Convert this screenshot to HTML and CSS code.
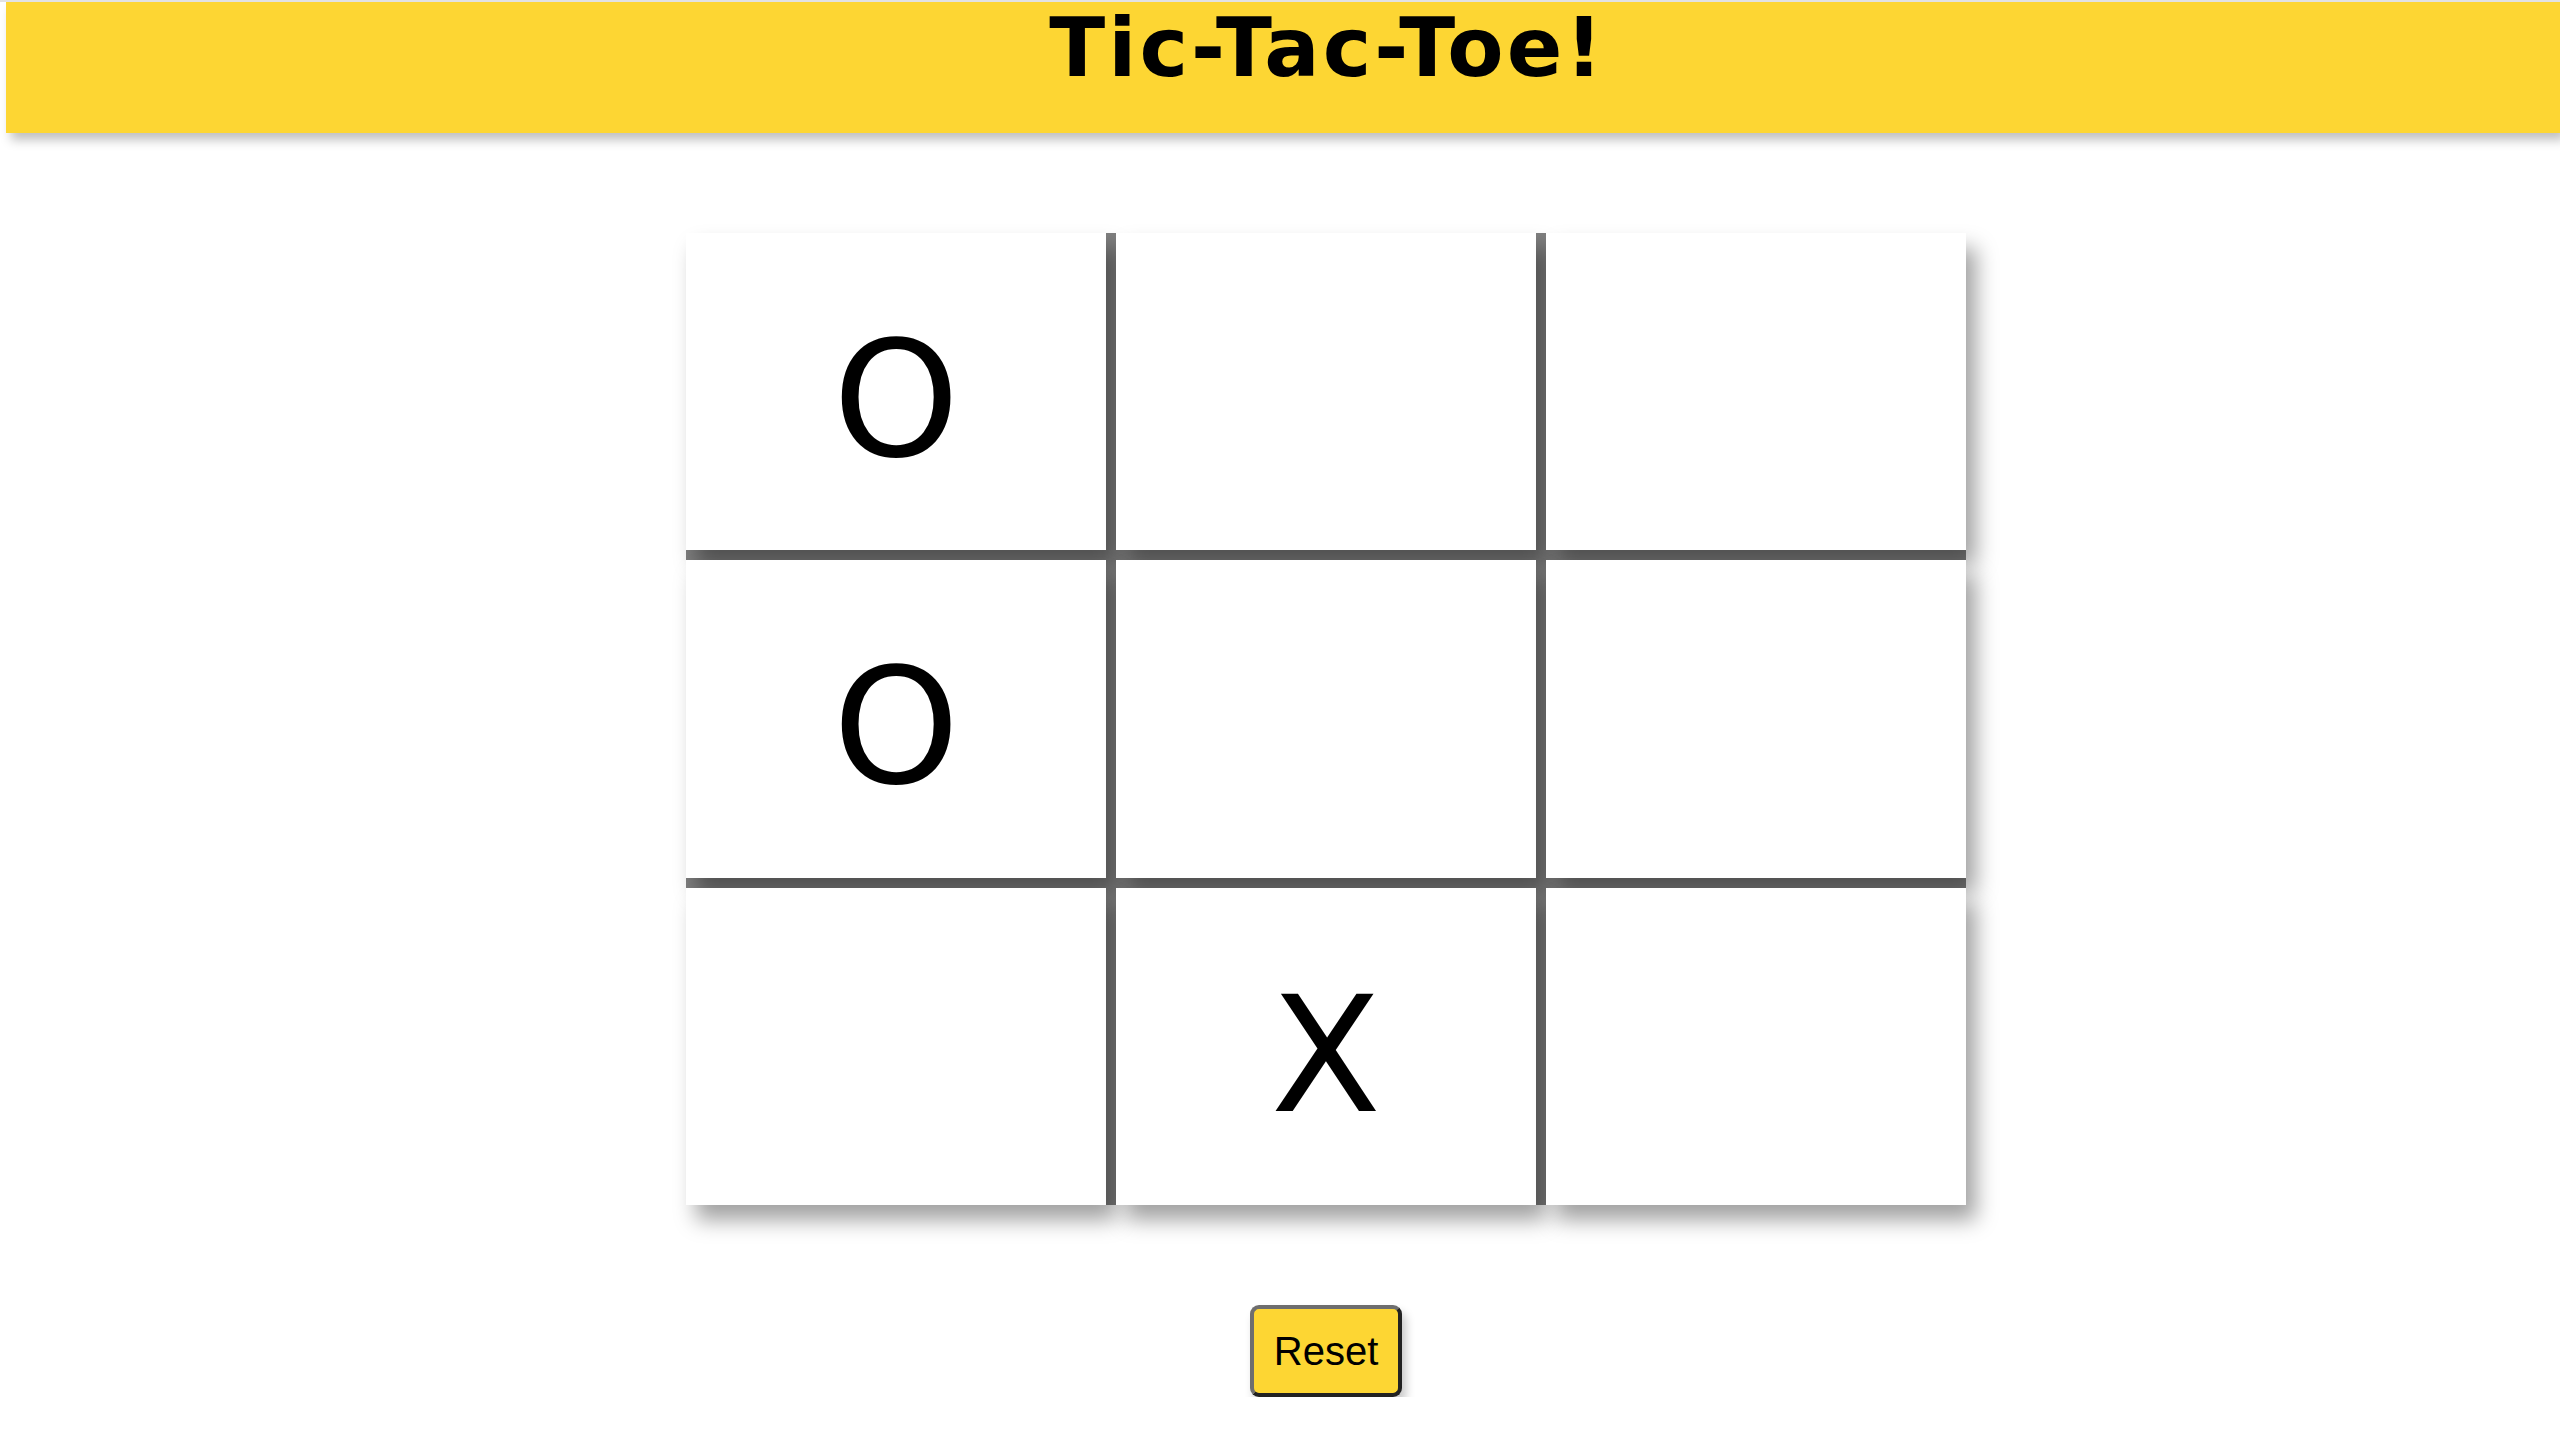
FILE: index.html
```html
<!DOCTYPE html>
<html lang="en">
<head>
<meta charset="utf-8">
<title>Tic-Tac-Toe!</title>
<link rel="stylesheet" href="styles.css">
</head>
<body>
<header class="topbar"><h1 class="title">Tic-Tac-Toe!</h1></header>
<main class="game">
  <div class="board">
    <div class="cell">O</div>
    <div class="cell"></div>
    <div class="cell"></div>
    <div class="cell">O</div>
    <div class="cell"></div>
    <div class="cell"></div>
    <div class="cell"></div>
    <div class="cell">X</div>
    <div class="cell"></div>
  </div>
  <button class="reset" type="button">Reset</button>
</main>
</body>
</html>
```

FILE: styles.css
```css
html, body {
  margin: 0;
  padding: 0;
  background: #ffffff;
}
body {
  border-top: 2px solid #e2e2e2;
  overflow: hidden;
}
.topbar {
  margin-left: 6px;
  padding-left: 89px;
  height: 131px;
  background: #fdd633;
  box-shadow: 5px 7px 10px rgba(0, 0, 0, 0.25);
  position: relative;
  z-index: 1;
}
.title {
  margin: 0;
  text-align: center;
  font-family: "DejaVu Sans", sans-serif;
  font-weight: bold;
  font-size: 82px;
  line-height: 91px;
  letter-spacing: 3px;
  color: #000;
}
.game {
  padding-left: 92px;
  padding-top: 100px;
  display: flex;
  flex-direction: column;
  align-items: center;
}
.board {
  width: 1280px;
  height: 972px;
  display: grid;
  grid-template-columns: repeat(3, 1fr);
  grid-template-rows: repeat(3, 1fr);
  gap: 10px;
  background: #808080;
}
.cell {
  background: #ffffff;
  box-shadow: 10px 15px 20px rgba(0, 0, 0, 0.37);
  display: flex;
  align-items: center;
  justify-content: center;
  box-sizing: border-box;
  padding-top: 18px;
  font-family: "DejaVu Sans", sans-serif;
  font-size: 161px;
  color: #000;
}
.reset {
  margin-top: 100px;
  width: 152px;
  height: 92px;
  box-sizing: border-box;
  padding: 0;
  border: 4px solid;
  border-color: #6e6e6e #222222 #222222 #6e6e6e;
  border-radius: 9px;
  background: #fdd633;
  box-shadow: 4px 7px 10px rgba(0, 0, 0, 0.22);
  font-family: "Liberation Sans", Arial, sans-serif;
  font-size: 40px;
  color: #000;
}
```
